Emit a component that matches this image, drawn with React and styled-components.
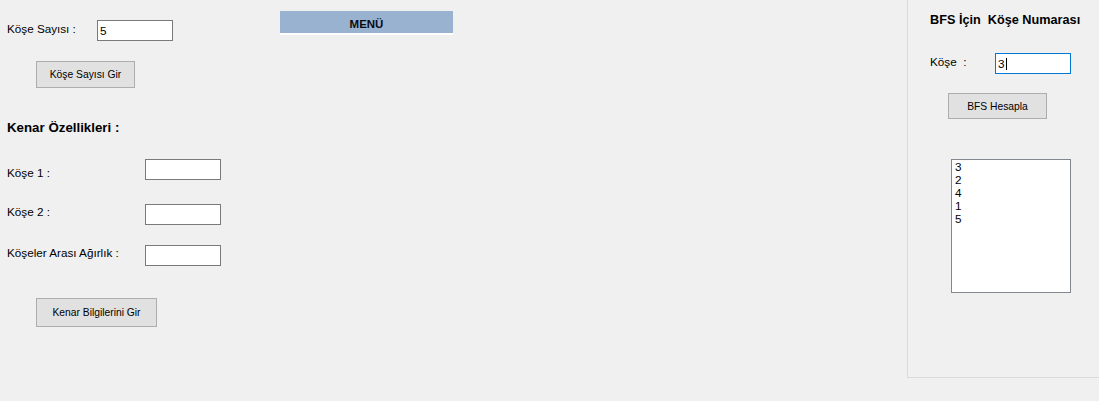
import React from "react";
import styled, { createGlobalStyle } from "styled-components";

const Global = createGlobalStyle`
  html, body { margin: 0; padding: 0; background: #f0f0f0; }
  body { font-family: "Liberation Sans", Arial, sans-serif; color: #000; }
`;

const Form = styled.div`
  width: 1099px;
  height: 401px;
  display: flex;
  background: #f0f0f0;
  font-family: "Liberation Sans", Arial, sans-serif;
  font-size: 11.7px;
  overflow: hidden;
`;

const LeftForm = styled.div`
  width: 273px;
  padding: 20px 0 0 7px;
  display: flex;
  flex-direction: column;
  align-items: flex-start;
`;

const FieldRow = styled.div`
  display: flex;
  align-items: flex-start;
  margin-top: ${(p) => p.$top || 0}px;
  margin-left: ${(p) => p.$left || 0}px;
`;

const Label = styled.div`
  width: ${(p) => p.$w}px;
  margin-top: ${(p) => p.$shift || 0}px;
  line-height: 14px;
  white-space: pre;
  font-size: 11.7px;
`;

const TextBox = styled.div`
  box-sizing: border-box;
  width: ${(p) => p.$w || 76}px;
  height: 21px;
  background: #fff;
  border: 1px solid ${(p) => (p.$focused ? "#0078d7" : "#7a7a7a")};
  padding-left: 2px;
  display: flex;
  align-items: center;
  font-size: 11.7px;
  line-height: 14px;
`;

const Caret = styled.span`
  display: inline-block;
  width: 1px;
  height: 12px;
  background: #000;
  margin-left: 1px;
`;

const Button = styled.div`
  box-sizing: border-box;
  width: ${(p) => p.$w}px;
  height: ${(p) => p.$h}px;
  margin-top: ${(p) => p.$top}px;
  margin-left: ${(p) => p.$left}px;
  background: #e1e1e1;
  border: 1px solid #adadad;
  display: flex;
  align-items: center;
  justify-content: center;
  font-size: 10.3px;
  color: #000;
`;

const Heading = styled.div`
  margin-top: ${(p) => p.$top}px;
  margin-left: ${(p) => p.$left || 0}px;
  font-weight: bold;
  font-size: ${(p) => p.$size || 12.7}px;
  line-height: 14px;
  white-space: pre;
`;

const MenuColumn = styled.div`
  flex: 1;
  padding-top: 11px;
`;

const MenuBar = styled.div`
  width: 173px;
  box-sizing: content-box;
  height: 15px;
  padding-top: 7px;
  background: #98b2d0;
  border-bottom: 2px solid #fff;
  display: flex;
  justify-content: center;
  font-weight: bold;
  font-size: 11.5px;
  line-height: 13px;
  color: #0a0a14;
`;

const RightPanel = styled.div`
  box-sizing: border-box;
  width: 192px;
  height: 378px;
  border-left: 1px solid #dadada;
  border-bottom: 1px solid #dadada;
  padding: 13px 0 0 22px;
  display: flex;
  flex-direction: column;
  align-items: flex-start;
`;

const ListBox = styled.div`
  box-sizing: border-box;
  width: 120px;
  height: 134px;
  margin-top: ${(p) => p.$top}px;
  margin-left: ${(p) => p.$left}px;
  background: #fff;
  border: 1px solid #828790;
  padding: 0 0 0 3px;
  font-size: 11.7px;
  line-height: 13px;
`;

const ListItem = styled.div`
  height: 13px;
`;

export default function App() {
  const result = ["3", "2", "4", "1", "5"];
  return (
    <>
      <Global />
      <Form>
        <LeftForm>
          <FieldRow>
            <Label $w={90} $shift={2}>Köşe Sayısı :</Label>
            <TextBox>5</TextBox>
          </FieldRow>
          <Button $w={99} $h={27} $top={20} $left={29}>Köşe Sayısı Gir</Button>
          <Heading $top={33} $size={13.3}>Kenar Özellikleri :</Heading>
          <FieldRow $top={24}>
            <Label $w={138} $shift={7}>Köşe 1 :</Label>
            <TextBox />
          </FieldRow>
          <FieldRow $top={24}>
            <Label $w={138} $shift={1}>Köşe 2 :</Label>
            <TextBox />
          </FieldRow>
          <FieldRow $top={20}>
            <Label $w={138} $shift={1}>Köşeler Arası Ağırlık :</Label>
            <TextBox />
          </FieldRow>
          <Button $w={121} $h={29} $top={32} $left={29}>Kenar Bilgilerini Gir</Button>
        </LeftForm>
        <MenuColumn>
          <MenuBar>MENÜ</MenuBar>
        </MenuColumn>
        <RightPanel>
          <Heading $top={0}>BFS İçin  Köşe Numarası</Heading>
          <FieldRow $top={26}>
            <Label $w={65} $shift={2}>Köşe  :</Label>
            <TextBox $focused>
              3<Caret />
            </TextBox>
          </FieldRow>
          <Button $w={99} $h={26} $top={19} $left={18}>BFS Hesapla</Button>
          <ListBox $top={40} $left={21}>
            {result.map((n, i) => (
              <ListItem key={i}>{n}</ListItem>
            ))}
          </ListBox>
        </RightPanel>
      </Form>
    </>
  );
}
